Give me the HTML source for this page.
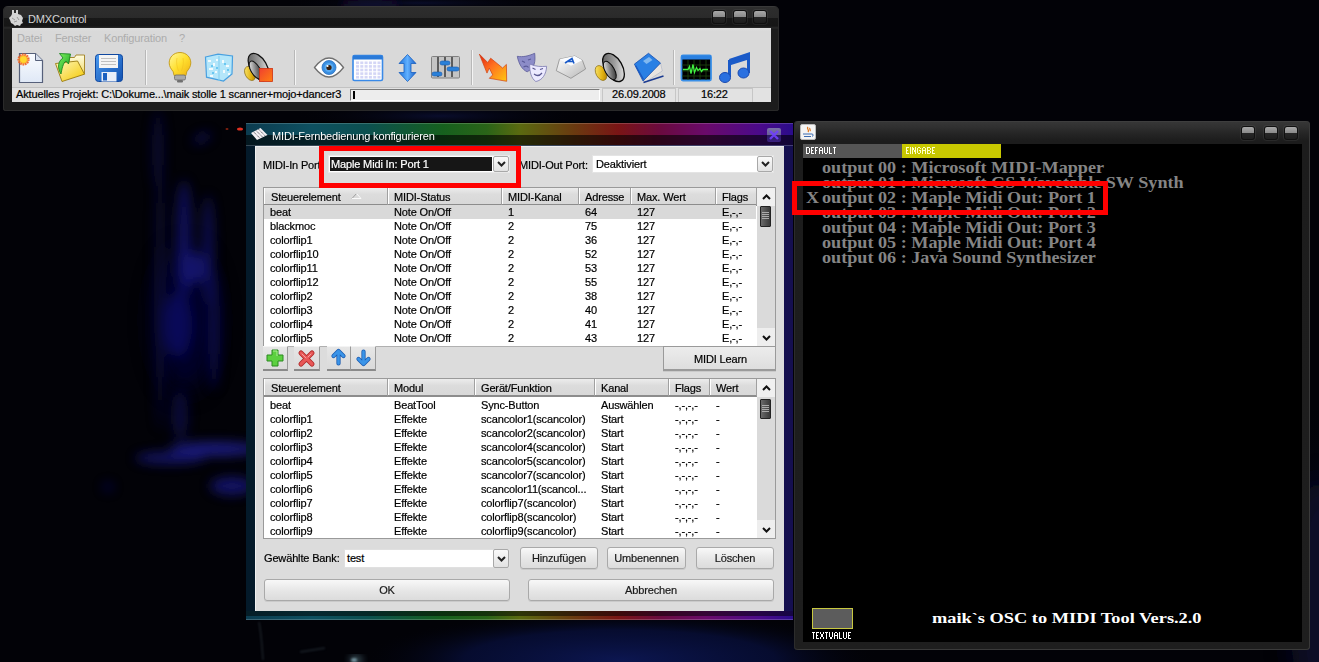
<!DOCTYPE html><html><head><meta charset="utf-8"><style>
*{margin:0;padding:0;box-sizing:border-box}
html,body{width:1319px;height:662px;overflow:hidden}
body{position:relative;background:#03040b;font-family:"Liberation Sans",sans-serif;font-size:11px;color:#000;letter-spacing:-0.15px}
.a{position:absolute}
.t{position:absolute;white-space:nowrap;line-height:13px;-webkit-text-stroke:0.2px currentColor}
.blob{position:absolute;border-radius:50%;filter:blur(14px)}
svg{position:absolute;overflow:visible}
#dmx{left:3px;top:6px;width:776px;height:105px;background:linear-gradient(#444 0,#2e2e2e 1px,#2a2a2a 12px,#181818 12px,#161616 20px,#2a2a2a 22px,#1c1c1c 23px,#1c1c1c);border-radius:5px 5px 3px 3px;box-shadow:inset 1px 0 #2a2a2a,inset -1px 0 #2a2a2a,inset 0 -1px #2a2a2a}
#dmxc{left:12px;top:28px;width:759px;height:74px;background:linear-gradient(#e2e2e2,#d9d9d9 3px)}
.tbb{position:absolute;width:14px;height:14px;border-radius:3px;background:linear-gradient(#a8a8a8,#8a8a8a 50%,#262626 54%,#1e1e1e);border:1px solid #101010;box-shadow:0 0 0 1px rgba(255,255,255,.06)}
#dlg{left:246px;top:122px;width:547px;height:498px;border-radius:4px 4px 0 0;background:linear-gradient(90deg,#041a2a,#06182c 50%,#150f50)}
.rb{position:absolute;left:246px;width:547px;background:linear-gradient(90deg,#0c3c50 0%,#0e5060 12%,#0c5050 22%,#16601e 36%,#2a6418 44%,#5a6a10 50%,#6a3a10 60%,#7a1515 68%,#6a0a40 76%,#6a0a6a 84%,#4a0a8a 94%,#2a0c8a 100%)}
#dlgc{left:255px;top:146px;width:529px;height:465px;background:#dcdcdc;box-shadow:inset 1px 1px #f0f0f0}
.lv{position:absolute;background:#fff;border:1px solid #9a9a9a}
.hd{position:absolute;height:18px;background:linear-gradient(#ececec,#dcdcdc 40%,#d8d8d8);border-right:1px solid #a0a0a0;border-bottom:2px solid #8c8c8c;box-shadow:inset 1px 0 #fff}
.btn{position:absolute;border:1px solid #a9a9a9;border-radius:3px;background:linear-gradient(#f8f8f8,#e6e6e6 55%,#dcdcdc);color:#1a1a1a;box-shadow:0 1px 0 rgba(0,0,0,.08)}
.dd{position:absolute;width:16px;background:linear-gradient(#fafafa,#e2e2e2);border:1px solid #a8a8a8;border-radius:2px}
.sb{position:absolute;background:#e8e8e8}
.thumb{position:absolute;width:11px;background:linear-gradient(90deg,#6a6a6a,#3a3a3a);border:1px solid #222;border-radius:1px}
#rw{left:794px;top:121px;width:516px;height:529px;background:linear-gradient(#464646,#363636 1px,#303030 6px,#262626 12px,#1c1c1c 20px,#1e1e1e);border-radius:4px;box-shadow:inset 1px 0 #2c2c2c,inset -1px 0 #3a3a3a,inset 0 -1px #3a3a3a}
#rwc{left:803px;top:144px;width:499px;height:498px;background:#000}
.out{position:absolute;font-family:"Liberation Serif",serif;font-weight:bold;font-size:17px;color:#858585;white-space:nowrap;line-height:15px;letter-spacing:0;transform:scaleX(1.068);transform-origin:0 0}
.px{position:absolute;font-family:"Liberation Mono",monospace;font-size:9px;line-height:9px;color:#fff;letter-spacing:0;white-space:nowrap}
</style></head><body>
<svg style="left:0;top:0" width="1319" height="662" viewBox="0 0 1319 662">
<defs>
<filter id="b6" x="-50%" y="-50%" width="200%" height="200%"><feGaussianBlur stdDeviation="6"/></filter>
<filter id="b1" x="-50%" y="-50%" width="200%" height="200%"><feGaussianBlur stdDeviation="1"/></filter>
<filter id="b4" x="-50%" y="-50%" width="200%" height="200%"><feGaussianBlur stdDeviation="4"/></filter>
<filter id="b12" x="-50%" y="-50%" width="200%" height="200%"><feGaussianBlur stdDeviation="12"/></filter>
</defs>
<radialGradient id="gBot" cx=".5" cy=".5" r=".5"><stop offset="0" stop-color="#0c1650"/><stop offset=".6" stop-color="#081040" stop-opacity=".7"/><stop offset="1" stop-color="#020207" stop-opacity="0"/></radialGradient>
<radialGradient id="gRt" cx=".5" cy=".5" r=".5"><stop offset="0" stop-color="#0a0e30"/><stop offset="1" stop-color="#020207" stop-opacity="0"/></radialGradient>
<rect width="1319" height="662" fill="#020207"/>
<ellipse cx="620" cy="660" rx="260" ry="50" fill="url(#gBot)"/>
<ellipse cx="1319" cy="560" rx="40" ry="160" fill="url(#gRt)"/>
<ellipse cx="440" cy="116" rx="150" ry="14" fill="url(#gRt)" opacity=".9"/>
<ellipse cx="420" cy="3" rx="140" ry="8" fill="url(#gRt)" opacity=".8"/>
<g filter="url(#b12)">

<ellipse cx="1319" cy="600" rx="30" ry="120" fill="#070a28"/>
<ellipse cx="185" cy="320" rx="30" ry="70" fill="#08083a" opacity=".7"/>
</g>
<g filter="url(#b6)" opacity=".7">
<ellipse cx="158" cy="150" rx="6" ry="40" fill="#101050" opacity=".8"/>
<ellipse cx="160" cy="290" rx="6" ry="140" fill="#0c0c44" opacity=".8"/>
<ellipse cx="184" cy="240" rx="8" ry="60" fill="#18187a"/>
<ellipse cx="208" cy="250" rx="6" ry="55" fill="#141470"/>
<ellipse cx="192" cy="268" rx="14" ry="16" fill="#1a1a88"/>
<ellipse cx="178" cy="325" rx="14" ry="32" fill="#10106a"/>
<ellipse cx="214" cy="330" rx="6" ry="60" fill="#0e0e58"/>
<ellipse cx="202" cy="138" rx="10" ry="4" fill="#181870" transform="rotate(-25 202 138)"/>
<ellipse cx="215" cy="449" rx="45" ry="7" fill="#2828b0"/>
<ellipse cx="170" cy="458" rx="35" ry="6" fill="#1a1a90"/>
<ellipse cx="232" cy="486" rx="22" ry="9" fill="#1a1a90"/>
<ellipse cx="180" cy="415" rx="8" ry="25" fill="#0e0e50"/>
<ellipse cx="108" cy="487" rx="5" ry="4" fill="#10106a"/>
</g>
<g filter="url(#b4)">
<ellipse cx="370" cy="5" rx="30" ry="5" fill="#141030"/>

</g>
<path d="M259 622c2 10 3 22 4 38" stroke="#506068" stroke-width="1.5" fill="none" opacity=".35" filter="url(#b1)"/>
<path d="M300 652l25-4" stroke="#40505a" stroke-width="2" opacity=".35" filter="url(#b1)"/>
<ellipse cx="356" cy="660" rx="6" ry="3" fill="#9ad0e0" opacity=".7" filter="url(#b4)"/>
<ellipse cx="354" cy="660" rx="3" ry="2" fill="#c0f0ff" opacity=".5" filter="url(#b1)"/>
<ellipse cx="240" cy="129" rx="3" ry="1.6" fill="#e03020"/>
<ellipse cx="227" cy="129" rx="1.5" ry="1" fill="#802010"/>
</svg>
<div id="dmx" class="a"></div>
<div class="t" style="left:28px;top:13px;color:#d4d4d4;-webkit-text-stroke:0">DMXControl</div>
<svg style="left:8px;top:9px" width="16" height="17" viewBox="0 0 16 17"><path d="M3 7l1-2 0-4h2v3h2V1h2v4l3 1 2 3-1 3 1 2-2 1-1 2-3-1-2 1-2-2-2-1-1-3-1-2z" fill="#d4d4d4"/><path d="M4 9l3 2M9 8l2 3M6 13l3-1" stroke="#9a9a9a" stroke-width="1"/></svg>
<div class="tbb" style="left:712px;top:10px"></div>
<div class="tbb" style="left:733px;top:10px"></div>
<div class="tbb" style="left:753px;top:10px"></div>
<div id="dmxc" class="a"></div>
<div class="t" style="left:17px;top:32px;color:#acacac;-webkit-text-stroke:0">Datei</div>
<div class="t" style="left:55px;top:32px;color:#acacac;-webkit-text-stroke:0">Fenster</div>
<div class="t" style="left:104px;top:32px;color:#acacac;-webkit-text-stroke:0">Konfiguration</div>
<div class="t" style="left:179px;top:32px;color:#acacac;-webkit-text-stroke:0">?</div>
<div class="a" style="left:145px;top:50px;width:1px;height:35px;background:#b8b8b8;box-shadow:1px 0 #f4f4f4"></div>
<div class="a" style="left:294px;top:50px;width:1px;height:35px;background:#b8b8b8;box-shadow:1px 0 #f4f4f4"></div>
<div class="a" style="left:471px;top:50px;width:1px;height:35px;background:#b8b8b8;box-shadow:1px 0 #f4f4f4"></div>
<div class="a" style="left:673px;top:50px;width:1px;height:35px;background:#b8b8b8;box-shadow:1px 0 #f4f4f4"></div>
<div class="a" style="left:12px;top:87px;width:759px;height:15px;background:#e2e2e2;border-top:1px solid #c2c2c2"></div>
<div class="t" style="left:16px;top:88px;">Aktuelles Projekt: C:\Dokume...\maik stolle 1 scanner+mojo+dancer3</div>
<div class="a" style="left:350px;top:89px;width:250px;height:12px;background:#ededed;border:1px solid #7a7a7a;border-right-color:#fff;border-bottom-color:#fff"></div>
<div class="a" style="left:353px;top:91px;width:2px;height:8px;background:#000"></div>
<div class="a" style="left:602px;top:88px;width:74px;height:14px;border:1px solid #c6c6c6;border-bottom:none"></div>
<div class="a" style="left:678px;top:88px;width:75px;height:14px;border:1px solid #c6c6c6;border-bottom:none"></div>
<div class="t" style="left:612px;top:88px;">26.09.2008</div>
<div class="t" style="left:701px;top:88px;">16:22</div>
<svg style="left:0;top:0" width="800" height="90" viewBox="0 0 800 90">
<defs>
<linearGradient id="gPaper" x1="0" y1="0" x2="0" y2="1"><stop offset="0" stop-color="#fafcff"/><stop offset="1" stop-color="#dfe8f6"/></linearGradient>
<radialGradient id="gSun"><stop offset="0" stop-color="#ffe040"/><stop offset=".5" stop-color="#ffc020"/><stop offset="1" stop-color="#f04a10" stop-opacity=".0"/></radialGradient>
<linearGradient id="gFold" x1="0" y1="0" x2="1" y2="1"><stop offset="0" stop-color="#fff8c0"/><stop offset="1" stop-color="#f4c800"/></linearGradient>
<linearGradient id="gFoldB" x1="0" y1="0" x2="0" y2="1"><stop offset="0" stop-color="#fffce0"/><stop offset="1" stop-color="#f0d860"/></linearGradient>
<linearGradient id="gGreen" x1="0" y1="0" x2="1" y2="1"><stop offset="0" stop-color="#80f060"/><stop offset="1" stop-color="#10a020"/></linearGradient>
<linearGradient id="gBlue" x1="0" y1="0" x2="1" y2="1"><stop offset="0" stop-color="#4a9af0"/><stop offset="1" stop-color="#1050b0"/></linearGradient>
<linearGradient id="gBulb" x1="0" y1="0" x2="1" y2="1"><stop offset="0" stop-color="#fff8a0"/><stop offset=".5" stop-color="#ffe030"/><stop offset="1" stop-color="#f0b010"/></linearGradient>
<linearGradient id="gRed" x1="0" y1="0" x2="1" y2="1"><stop offset="0" stop-color="#f04030"/><stop offset="1" stop-color="#ff8010"/></linearGradient>
<linearGradient id="gCone" x1="0" y1="0" x2="1" y2="1"><stop offset="0" stop-color="#505050"/><stop offset=".55" stop-color="#a0a0a0"/><stop offset="1" stop-color="#ffffff"/></linearGradient>
<linearGradient id="gConeIn" x1="0" y1="0" x2="1" y2="1"><stop offset="0" stop-color="#ffffff"/><stop offset=".6" stop-color="#707070"/><stop offset="1" stop-color="#202020"/></linearGradient>
<linearGradient id="gGold" x1="0" y1="0" x2="1" y2="1"><stop offset="0" stop-color="#fff080"/><stop offset=".6" stop-color="#e0b010"/><stop offset="1" stop-color="#a07000"/></linearGradient>
<linearGradient id="gZig" x1="0" y1="0" x2="1" y2="1"><stop offset="0" stop-color="#e02010"/><stop offset=".45" stop-color="#ff7020"/><stop offset="1" stop-color="#ffc810"/></linearGradient>
<linearGradient id="gKey" x1="0" y1="0" x2="1" y2="1"><stop offset="0" stop-color="#ffffff"/><stop offset="1" stop-color="#b8b8b8"/></linearGradient>
<linearGradient id="gArr" x1="0" y1="0" x2="1" y2="0"><stop offset="0" stop-color="#1a70d8"/><stop offset=".5" stop-color="#60b0ff"/><stop offset="1" stop-color="#1a60c8"/></linearGradient>
</defs>
<!-- new doc -->
<path d="M19.5 53.5h16l7 7v22h-23z" fill="url(#gPaper)" stroke="#56607a" stroke-width="1.2"/>
<path d="M35.5 53.5v7h7" fill="#d8e0ee" stroke="#56607a" stroke-width="1"/>
<circle cx="23.5" cy="59.5" r="6.5" fill="url(#gSun)"/>
<circle cx="23.5" cy="59.5" r="5" fill="none" stroke="#f05a20" stroke-width="2.2" stroke-dasharray="1.3 1.1" opacity=".85"/>
<circle cx="23.5" cy="59.5" r="3" fill="#ffd830"/>
<!-- open folder -->
<path d="M69 57.5h5.5l1.5-2.5h8.5v19l-15 2z" fill="url(#gFoldB)" stroke="#a08020" stroke-width=".9"/>
<path d="M55.5 63.5l22-2.5 7 13.2-22.5 7.3z" fill="url(#gFold)" stroke="#9a7a10" stroke-width=".9"/>
<path d="M61 74c-4-6-3-13 2-16l-3.5-4.5 11 .5-2 10-2.5-3c-3 2-4 8-5 13z" fill="url(#gGreen)" stroke="#108018" stroke-width=".8"/>
<!-- save -->
<rect x="95.5" y="54.5" width="27" height="27" rx="3" fill="url(#gBlue)" stroke="#1048a0"/>
<rect x="99" y="55" width="19" height="13" fill="#f4f4f4"/>
<path d="M101 58.5h15M101 61.5h15M101 64.5h15" stroke="#c0c0c0"/>
<rect x="101.5" y="72" width="15" height="9.5" fill="#e8eef8"/>
<rect x="103" y="73" width="4" height="7.5" fill="#1a60c0"/>
<!-- separator drawn elsewhere -->
<!-- bulb -->
<path d="M180 52.5c6.2 0 10.8 4.6 10.8 10.4 0 3.8-2.2 6.3-4 8.8l-.9 3.8h-11.8l-.9-3.8c-1.8-2.5-4-5-4-8.8 0-5.8 4.6-10.4 10.8-10.4z" fill="url(#gBulb)" stroke="#c8a020" stroke-width="1"/>
<path d="M177 58c-1 4 0 9 1.5 13M183 58c1 4 0 9-1.5 13" stroke="#f0c020" stroke-width=".8" fill="none" opacity=".7"/>
<rect x="174.5" y="75" width="11" height="5" rx="1.5" fill="#a8a8a8" stroke="#6a6a6a" stroke-width=".8"/>
<rect x="177" y="80" width="6" height="2.5" rx="1" fill="#707070"/>
<!-- ice cube -->
<path d="M205.5 57l12.5-2.8 14.5 1.8-.5 18-8.5 7-17-3.8z" fill="#b4e6fa" stroke="#48a0e0" stroke-width="1.2"/>
<path d="M219 56v25" stroke="#80cdf0" stroke-width="1"/>
<g fill="#ffffff" opacity=".85"><rect x="208" y="60" width="3" height="2"/><rect x="213" y="63" width="2" height="3"/><rect x="209" y="68" width="4" height="2"/><rect x="215" y="71" width="2" height="2"/><rect x="210" y="75" width="3" height="2"/><rect x="222" y="60" width="2" height="3"/><rect x="226" y="65" width="3" height="2"/><rect x="223" y="70" width="2" height="3"/><rect x="228" y="73" width="2" height="2"/><rect x="216" y="59" width="2" height="2"/></g>
<g fill="#58c0f0" opacity=".8"><rect x="211" y="65" width="2" height="2"/><rect x="216" y="67" width="2" height="2"/><rect x="224" y="63" width="2" height="2"/><rect x="227" y="69" width="2" height="2"/><rect x="212" y="72" width="2" height="2"/></g>
<!-- speaker + red square -->
<ellipse cx="250" cy="73.5" rx="4.8" ry="7.5" transform="rotate(-28 250 73.5)" fill="url(#gGold)" stroke="#806000" stroke-width=".6"/>
<ellipse cx="258.5" cy="67" rx="8.3" ry="15" transform="rotate(-30 258.5 67)" fill="url(#gCone)" stroke="#101010" stroke-width="1.2"/>
<ellipse cx="255.5" cy="70" rx="4.5" ry="10" transform="rotate(-30 255.5 70)" fill="url(#gConeIn)" stroke="#101010" stroke-width="1"/>
<rect x="259.5" y="68.5" width="13" height="13" fill="url(#gRed)" stroke="#d03010" stroke-width=".8"/>
<!-- eye -->
<path d="M314.5 67.5c5-6.5 10-9.5 14.5-9.5s9.5 3 14.5 9.5c-5 6.5-10 9.5-14.5 9.5s-9.5-3-14.5-9.5z" fill="#ffffff" stroke="#707070" stroke-width="1.3"/>
<circle cx="329" cy="67.5" r="7" fill="#3a8ee0" stroke="#2a70c0" stroke-width=".8"/>
<circle cx="329" cy="67.5" r="4.5" fill="#5aaaf0"/>
<circle cx="329" cy="67.5" r="2.6" fill="#3a2010"/>
<circle cx="327.5" cy="66" r="1.1" fill="#fff"/>
<!-- calendar -->
<rect x="353" y="55.5" width="29.5" height="25" rx="1.5" fill="#ffffff" stroke="#3a8ae8" stroke-width="1.6"/>
<rect x="353" y="55.5" width="29.5" height="4" fill="#2a7ad8"/>
<g fill="#d4d6f6"><rect x="356.0" y="61.5" width="3" height="2.6"/><rect x="360.3" y="61.5" width="3" height="2.6"/><rect x="364.6" y="61.5" width="3" height="2.6"/><rect x="368.9" y="61.5" width="3" height="2.6"/><rect x="373.2" y="61.5" width="3" height="2.6"/><rect x="377.5" y="61.5" width="3" height="2.6"/><rect x="356.0" y="65.1" width="3" height="2.6"/><rect x="360.3" y="65.1" width="3" height="2.6"/><rect x="364.6" y="65.1" width="3" height="2.6"/><rect x="368.9" y="65.1" width="3" height="2.6"/><rect x="373.2" y="65.1" width="3" height="2.6"/><rect x="377.5" y="65.1" width="3" height="2.6"/><rect x="356.0" y="68.7" width="3" height="2.6"/><rect x="360.3" y="68.7" width="3" height="2.6"/><rect x="364.6" y="68.7" width="3" height="2.6"/><rect x="368.9" y="68.7" width="3" height="2.6"/><rect x="373.2" y="68.7" width="3" height="2.6"/><rect x="377.5" y="68.7" width="3" height="2.6"/><rect x="356.0" y="72.3" width="3" height="2.6"/><rect x="360.3" y="72.3" width="3" height="2.6"/><rect x="364.6" y="72.3" width="3" height="2.6"/><rect x="368.9" y="72.3" width="3" height="2.6"/><rect x="373.2" y="72.3" width="3" height="2.6"/><rect x="377.5" y="72.3" width="3" height="2.6"/><rect x="356.0" y="75.9" width="3" height="2.6"/><rect x="360.3" y="75.9" width="3" height="2.6"/><rect x="364.6" y="75.9" width="3" height="2.6"/><rect x="368.9" y="75.9" width="3" height="2.6"/><rect x="373.2" y="75.9" width="3" height="2.6"/><rect x="377.5" y="75.9" width="3" height="2.6"/></g>
<!-- up/down arrow -->
<path d="M407.5 54.5l8.5 9h-5v9h5l-8.5 9-8.5-9h5v-9h-5z" fill="url(#gArr)" stroke="#1860c0" stroke-width=".8"/>
<!-- sliders -->
<rect x="431.5" y="56.5" width="28" height="21.5" rx="1" fill="#c4c4c4" stroke="#808080"/>
<path d="M438 57v20M445 57v20M452 57v20" stroke="#5c5c5c" stroke-width="2"/>
<g fill="#2a80d8" stroke="#1a5ab0" stroke-width=".6"><rect x="432" y="72" width="10" height="4" rx="2"/><rect x="440" y="61" width="10" height="4" rx="2"/><rect x="447" y="67" width="12" height="4" rx="2"/></g>
<!-- zigzag -->
<path d="M479.3 54.1l8.4 8.4 3-4.3 11.9 9.8 3.8-3.6.3 16.9-17.4-3 3.4-3.4-3.4-6.8-2.3 5z" fill="url(#gZig)" stroke="#d04010" stroke-width=".7" stroke-linejoin="round"/>
<!-- masks -->
<path d="M517.3 56.3c6 1 11-.3 17.4-3 .8 8 .3 14.5-7.5 18.5-5-2-8.5-8-9.9-15.5z" fill="#8c8cc8" stroke="#5a5a98" stroke-width=".8"/>
<path d="M522 61l3 1.5M528 60l3-1M523.5 67c2-1 4-1 5 .5" stroke="#5a5a98" stroke-width="1.2" fill="none"/>
<path d="M529.8 64.1c6 2.5 11 2.7 16.8 2.2-.3 8-4.3 14-10.8 15.2-4.5-3-6.5-10-6-17.4z" fill="#eceaff" stroke="#7a78b0" stroke-width=".8"/>
<path d="M532.5 68l3 1.5M540 69.5l3-1M534 74c2.5 2 5.5 2 8-1" stroke="#5a5890" stroke-width="1.2" fill="none"/>
<!-- keycap -->
<path d="M559.5 59.2l15.3-3.2 7.6 4.3 3.2 8.7-14.7 9.3-14.6-7.6z" fill="url(#gKey)" stroke="#8a8a8a" stroke-width=".8"/>
<path d="M559.5 59.2l15.3-3.2 7.6 4.3-11.4 5.5z" fill="#fafcff"/>
<path d="M565 63l7-4.5 2 5M567 61.5h6" stroke="#1a5ac8" stroke-width="1.6" fill="none"/>
<!-- speaker -->
<ellipse cx="601" cy="73" rx="5" ry="8" transform="rotate(-28 601 73)" fill="url(#gGold)" stroke="#806000" stroke-width=".6"/>
<ellipse cx="613.5" cy="67.5" rx="8.8" ry="15.5" transform="rotate(-30 613.5 67.5)" fill="url(#gCone)" stroke="#0a0a0a" stroke-width="1.3"/>
<ellipse cx="609.8" cy="70.5" rx="4.6" ry="10.2" transform="rotate(-30 609.8 70.5)" fill="url(#gConeIn)" stroke="#0a0a0a" stroke-width="1"/>
<!-- book -->
<path d="M660.5 63l1.8 8-16 10.5-3-.5z" fill="#e8e4e0" stroke="#a0a8c0" stroke-width=".5"/>
<path d="M634.4 64.1l14.1-10.8 12 9.7-17.5 18z" fill="#2a80e4" stroke="#1a50b0" stroke-width=".8"/>
<path d="M635.5 65.5l8 14" stroke="#1a58c0" stroke-width="1.4"/>
<path d="M643.5 82.5l20-6.5" stroke="#1a3a90" stroke-width="1.5"/>
<path d="M643 61l6-4 3.5 3-6 4z" fill="#80b8f0"/>
<!-- monitor -->
<rect x="681.5" y="55.5" width="29.5" height="25" rx="1.5" fill="#000" stroke="#3a90e8" stroke-width="1.8"/>
<rect x="681.5" y="55.5" width="29.5" height="4" fill="#2a80e0"/>
<path d="M688 60v20M694 60v20M700 60v20M706 60v20M682 65h28M682 71h28M682 76h28" stroke="#204a10" stroke-width=".8"/>
<path d="M683 69.5h5l1.5-3 1.5 7 2-9 1.5 8 2-5 1.5 3 2-2 1.5 3 1.5-2h5" stroke="#40f040" stroke-width="1.3" fill="none"/>
<!-- notes -->
<path d="M729.5 60.5l19-6.5v19" stroke="#1a5ac8" stroke-width="3" fill="none"/>
<path d="M729.5 60.5l19-6.5v5.5l-19 6z" fill="#1a5ac8"/>
<path d="M729.5 60v17" stroke="#1a5ac8" stroke-width="3"/>
<ellipse cx="725" cy="77.5" rx="5.5" ry="5" fill="#2a70e0" stroke="#1a4ab0"/>
<ellipse cx="743.5" cy="73" rx="5.5" ry="5" fill="#2a70e0" stroke="#1a4ab0"/>
</svg>
<div id="dlg" class="a"></div>
<div class="rb" style="top:123px;height:22px"></div>
<div class="a" style="left:246px;top:135px;width:547px;height:10px;background:rgba(0,0,0,.6)"></div>
<div class="a" style="left:246px;top:123px;width:547px;height:1px;background:rgba(255,255,255,.18)"></div>
<div class="a" style="left:246px;top:122px;width:547px;height:1px;background:#000"></div>
<div class="a" style="left:246px;top:145px;width:547px;height:1px;background:rgba(255,255,255,.2)"></div>
<div class="rb" style="top:611px;height:9px"></div>
<div class="a" style="left:246px;top:611px;width:547px;height:5px;background:rgba(0,0,0,.5)"></div>
<div class="a" style="left:246px;top:619px;width:547px;height:1px;background:rgba(255,255,255,.2)"></div>
<div id="dlgc" class="a"></div>
<div class="t" style="left:272px;top:130px;color:#fff;-webkit-text-stroke:0">MIDI-Fernbedienung konfigurieren</div>
<svg style="left:0;top:0" width="300" height="150" viewBox="0 0 300 150"><path d="M251 133l9.5-5 7 7-10.5 5z" fill="#f4f0f4"/><path d="M253.5 131.8l7 7M256 130.5l7 7M258.5 129.2l7 7" stroke="#404048" stroke-width=".9" stroke-dasharray="1.2 .8"/></svg>
<div class="a" style="left:767px;top:128px;width:14px;height:14px;border-radius:2px;background:linear-gradient(#7a70a8,#6a6098 50%,#2a1a60 52%,#3a2080)"></div>
<svg style="left:768px;top:129px" width="12" height="12" viewBox="0 0 12 12"><path d="M2 2l8 8M10 2l-8 8" stroke="#7040ff" stroke-width="2.4" opacity=".9"/></svg>
<div class="t" style="left:263px;top:159px;">MIDI-In Port</div>
<div class="t" style="left:519px;top:159px;">MIDI-Out Port:</div>
<div class="a" style="left:328px;top:155px;width:182px;height:18px;background:#fff;border:1px solid #e8e8e8"></div>
<div class="a" style="left:330px;top:157px;width:162px;height:14px;background:#161616"></div>
<div class="t" style="left:331px;top:158px;color:#fff">Maple Midi In: Port 1</div>
<div class="dd" style="left:493px;top:156px;height:16px"></div>
<div class="a" style="left:592px;top:155px;width:182px;height:18px;background:#fff;border:1px solid #e4e4e4"></div>
<div class="t" style="left:596px;top:158px;">Deaktiviert</div>
<div class="dd" style="left:757px;top:156px;height:16px"></div>
<svg style="left:497px;top:161px" width="9" height="6" viewBox="0 0 9 6"><path d="M1 1l3.5 3.5L8 1" stroke="#222" stroke-width="2" fill="none"/></svg>
<svg style="left:761px;top:161px" width="9" height="6" viewBox="0 0 9 6"><path d="M1 1l3.5 3.5L8 1" stroke="#222" stroke-width="2" fill="none"/></svg>
<div class="lv" style="left:263px;top:187px;width:513px;height:160px"></div>
<div class="hd" style="left:264px;top:188px;width:124px"></div>
<div class="hd" style="left:388px;top:188px;width:114px"></div>
<div class="hd" style="left:502px;top:188px;width:77px"></div>
<div class="hd" style="left:579px;top:188px;width:52px"></div>
<div class="hd" style="left:631px;top:188px;width:85px"></div>
<div class="hd" style="left:716px;top:188px;width:41px"></div>
<div class="t" style="left:271px;top:191px;">Steuerelement</div>
<div class="t" style="left:394px;top:191px;">MIDI-Status</div>
<div class="t" style="left:508px;top:191px;">MIDI-Kanal</div>
<div class="t" style="left:585px;top:191px;">Adresse</div>
<div class="t" style="left:637px;top:191px;">Max. Wert</div>
<div class="t" style="left:722px;top:191px;">Flags</div>
<div class="sb" style="left:757px;top:188px;width:18px;height:158px;background:#dadada"></div>
<div class="sb" style="left:757px;top:188px;width:18px;height:18px;background:#f0f0f0"></div>
<div class="sb" style="left:757px;top:328px;width:18px;height:18px;background:#eeeeee"></div>
<svg style="left:762px;top:194px" width="9" height="6" viewBox="0 0 9 6"><path d="M1 5l3.5-3.5L8 5" stroke="#111" stroke-width="2" fill="none"/></svg>
<div class="thumb" style="left:760px;top:206px;height:21px"></div>
<svg style="left:762px;top:211px" width="7" height="10" viewBox="0 0 7 10"><path d="M0 1.5h7M0 3.5h7M0 5.5h7M0 7.5h7" stroke="#aaa" stroke-width="1"/></svg>
<svg style="left:762px;top:335px" width="9" height="6" viewBox="0 0 9 6"><path d="M1 1l3.5 3.5L8 1" stroke="#111" stroke-width="2" fill="none"/></svg>
<div class="a" style="left:264px;top:205px;width:492px;height:14px;background:#d9d9d9"></div>
<div class="t" style="left:270px;top:206px;">beat</div>
<div class="t" style="left:394px;top:206px;">Note On/Off</div>
<div class="t" style="left:508px;top:206px;">1</div>
<div class="t" style="left:585px;top:206px;">64</div>
<div class="t" style="left:637px;top:206px;">127</div>
<div class="t" style="left:722px;top:206px;">E,-,-</div>
<div class="t" style="left:270px;top:220px;">blackmoc</div>
<div class="t" style="left:394px;top:220px;">Note On/Off</div>
<div class="t" style="left:508px;top:220px;">2</div>
<div class="t" style="left:585px;top:220px;">75</div>
<div class="t" style="left:637px;top:220px;">127</div>
<div class="t" style="left:722px;top:220px;">E,-,-</div>
<div class="t" style="left:270px;top:234px;">colorflip1</div>
<div class="t" style="left:394px;top:234px;">Note On/Off</div>
<div class="t" style="left:508px;top:234px;">2</div>
<div class="t" style="left:585px;top:234px;">36</div>
<div class="t" style="left:637px;top:234px;">127</div>
<div class="t" style="left:722px;top:234px;">E,-,-</div>
<div class="t" style="left:270px;top:248px;">colorflip10</div>
<div class="t" style="left:394px;top:248px;">Note On/Off</div>
<div class="t" style="left:508px;top:248px;">2</div>
<div class="t" style="left:585px;top:248px;">52</div>
<div class="t" style="left:637px;top:248px;">127</div>
<div class="t" style="left:722px;top:248px;">E,-,-</div>
<div class="t" style="left:270px;top:262px;">colorflip11</div>
<div class="t" style="left:394px;top:262px;">Note On/Off</div>
<div class="t" style="left:508px;top:262px;">2</div>
<div class="t" style="left:585px;top:262px;">53</div>
<div class="t" style="left:637px;top:262px;">127</div>
<div class="t" style="left:722px;top:262px;">E,-,-</div>
<div class="t" style="left:270px;top:276px;">colorflip12</div>
<div class="t" style="left:394px;top:276px;">Note On/Off</div>
<div class="t" style="left:508px;top:276px;">2</div>
<div class="t" style="left:585px;top:276px;">55</div>
<div class="t" style="left:637px;top:276px;">127</div>
<div class="t" style="left:722px;top:276px;">E,-,-</div>
<div class="t" style="left:270px;top:290px;">colorflip2</div>
<div class="t" style="left:394px;top:290px;">Note On/Off</div>
<div class="t" style="left:508px;top:290px;">2</div>
<div class="t" style="left:585px;top:290px;">38</div>
<div class="t" style="left:637px;top:290px;">127</div>
<div class="t" style="left:722px;top:290px;">E,-,-</div>
<div class="t" style="left:270px;top:304px;">colorflip3</div>
<div class="t" style="left:394px;top:304px;">Note On/Off</div>
<div class="t" style="left:508px;top:304px;">2</div>
<div class="t" style="left:585px;top:304px;">40</div>
<div class="t" style="left:637px;top:304px;">127</div>
<div class="t" style="left:722px;top:304px;">E,-,-</div>
<div class="t" style="left:270px;top:318px;">colorflip4</div>
<div class="t" style="left:394px;top:318px;">Note On/Off</div>
<div class="t" style="left:508px;top:318px;">2</div>
<div class="t" style="left:585px;top:318px;">41</div>
<div class="t" style="left:637px;top:318px;">127</div>
<div class="t" style="left:722px;top:318px;">E,-,-</div>
<div class="t" style="left:270px;top:332px;">colorflip5</div>
<div class="t" style="left:394px;top:332px;">Note On/Off</div>
<div class="t" style="left:508px;top:332px;">2</div>
<div class="t" style="left:585px;top:332px;">43</div>
<div class="t" style="left:637px;top:332px;">127</div>
<div class="t" style="left:722px;top:332px;">E,-,-</div>
<svg style="left:351px;top:192px" width="11" height="7" viewBox="0 0 11 7"><path d="M1 6.5L5.5 1.5" stroke="#a0a0a0" stroke-width="1"/><path d="M5.5 1.5L10 6.5M1 6.5h9" stroke="#fafafa" stroke-width="1"/></svg>
<div class="a" style="left:263px;top:346px;width:400px;height:25px;background:#dcdcdc;border-top:1px solid #b0b0b0"></div>
<div class="a" style="left:263px;top:346px;width:25px;height:25px;background:linear-gradient(#e6e6e6,#dadada);border-right:1px solid #9a9a9a;border-bottom:2px solid #8a8a8a;border-top:1px solid #f4f4f4"></div>
<div class="a" style="left:294px;top:346px;width:26px;height:25px;background:linear-gradient(#e6e6e6,#dadada);border-right:1px solid #9a9a9a;border-bottom:2px solid #8a8a8a;border-top:1px solid #f4f4f4"></div>
<div class="a" style="left:327px;top:346px;width:24px;height:25px;background:linear-gradient(#e6e6e6,#dadada);border-right:1px solid #9a9a9a;border-bottom:2px solid #8a8a8a;border-top:1px solid #f4f4f4"></div>
<div class="a" style="left:351px;top:346px;width:25px;height:25px;background:linear-gradient(#e6e6e6,#dadada);border-right:1px solid #9a9a9a;border-bottom:2px solid #8a8a8a;border-top:1px solid #f4f4f4"></div>
<svg style="left:266px;top:349px" width="18" height="18" viewBox="0 0 18 18"><path d="M6 1h6v5h5v6h-5v5H6v-5H1V6h5z" fill="#5cd040" stroke="#2a8a20" stroke-width="1"/><path d="M7 2h4v5" stroke="#a8f090" fill="none" stroke-width="1"/></svg>
<svg style="left:297px;top:349px" width="19" height="19" viewBox="0 0 19 19"><path d="M4 4l11 11M15 4L4 15" stroke="#b02a2a" stroke-width="5" stroke-linecap="round"/><path d="M4 4l11 11M15 4L4 15" stroke="#e85858" stroke-width="3.2" stroke-linecap="round"/><path d="M5 5l4 4M14 5l-3 3" stroke="#f8a0a0" stroke-width="1" stroke-linecap="round"/></svg>
<svg style="left:330px;top:348px" width="17" height="19" viewBox="0 0 17 19"><path d="M3.5 8L8.5 3l5 5M8.5 4v11.5" stroke="#1a5ab0" stroke-width="4.2" stroke-linecap="round" stroke-linejoin="round" fill="none"/><path d="M3.5 8L8.5 3l5 5M8.5 4v11.5" stroke="#3a94e8" stroke-width="2.6" stroke-linecap="round" stroke-linejoin="round" fill="none"/></svg>
<svg style="left:355px;top:348px" width="17" height="19" viewBox="0 0 17 19"><path d="M3.5 11l5 5 5-5M8.5 15V3.5" stroke="#1a5ab0" stroke-width="4.2" stroke-linecap="round" stroke-linejoin="round" fill="none"/><path d="M3.5 11l5 5 5-5M8.5 15V3.5" stroke="#3a94e8" stroke-width="2.6" stroke-linecap="round" stroke-linejoin="round" fill="none"/></svg>
<div class="btn" style="left:663px;top:346px;width:113px;height:25px;border-radius:0;border-color:#9a9a9a;border-width:1px 1px 2px 1px;background:linear-gradient(#ececec,#dedede)"></div>
<div class="t" style="left:694px;top:353px;">MIDI Learn</div>
<div class="lv" style="left:263px;top:378px;width:513px;height:161px"></div>
<div class="hd" style="left:264px;top:379px;width:124px"></div>
<div class="hd" style="left:388px;top:379px;width:87px"></div>
<div class="hd" style="left:475px;top:379px;width:120px"></div>
<div class="hd" style="left:595px;top:379px;width:74px"></div>
<div class="hd" style="left:669px;top:379px;width:41px"></div>
<div class="hd" style="left:710px;top:379px;width:47px"></div>
<div class="t" style="left:271px;top:382px;">Steuerelement</div>
<div class="t" style="left:394px;top:382px;">Modul</div>
<div class="t" style="left:481px;top:382px;">Gerät/Funktion</div>
<div class="t" style="left:601px;top:382px;">Kanal</div>
<div class="t" style="left:675px;top:382px;">Flags</div>
<div class="t" style="left:716px;top:382px;">Wert</div>
<div class="sb" style="left:757px;top:379px;width:18px;height:159px;background:#dadada"></div>
<div class="sb" style="left:757px;top:379px;width:18px;height:18px;background:#f0f0f0"></div>
<div class="sb" style="left:757px;top:520px;width:18px;height:18px;background:#eeeeee"></div>
<svg style="left:762px;top:385px" width="9" height="6" viewBox="0 0 9 6"><path d="M1 5l3.5-3.5L8 5" stroke="#111" stroke-width="2" fill="none"/></svg>
<div class="thumb" style="left:760px;top:399px;height:20px"></div>
<svg style="left:762px;top:404px" width="7" height="10" viewBox="0 0 7 10"><path d="M0 1.5h7M0 3.5h7M0 5.5h7M0 7.5h7" stroke="#aaa" stroke-width="1"/></svg>
<svg style="left:762px;top:527px" width="9" height="6" viewBox="0 0 9 6"><path d="M1 1l3.5 3.5L8 1" stroke="#111" stroke-width="2" fill="none"/></svg>
<div class="t" style="left:270px;top:399px;">beat</div>
<div class="t" style="left:394px;top:399px;">BeatTool</div>
<div class="t" style="left:481px;top:399px;">Sync-Button</div>
<div class="t" style="left:601px;top:399px;">Auswählen</div>
<div class="t" style="left:675px;top:399px;">-,-,-,-</div>
<div class="t" style="left:716px;top:399px;">-</div>
<div class="t" style="left:270px;top:413px;">colorflip1</div>
<div class="t" style="left:394px;top:413px;">Effekte</div>
<div class="t" style="left:481px;top:413px;">scancolor1(scancolor)</div>
<div class="t" style="left:601px;top:413px;">Start</div>
<div class="t" style="left:675px;top:413px;">-,-,-,-</div>
<div class="t" style="left:716px;top:413px;">-</div>
<div class="t" style="left:270px;top:427px;">colorflip2</div>
<div class="t" style="left:394px;top:427px;">Effekte</div>
<div class="t" style="left:481px;top:427px;">scancolor2(scancolor)</div>
<div class="t" style="left:601px;top:427px;">Start</div>
<div class="t" style="left:675px;top:427px;">-,-,-,-</div>
<div class="t" style="left:716px;top:427px;">-</div>
<div class="t" style="left:270px;top:441px;">colorflip3</div>
<div class="t" style="left:394px;top:441px;">Effekte</div>
<div class="t" style="left:481px;top:441px;">scancolor4(scancolor)</div>
<div class="t" style="left:601px;top:441px;">Start</div>
<div class="t" style="left:675px;top:441px;">-,-,-,-</div>
<div class="t" style="left:716px;top:441px;">-</div>
<div class="t" style="left:270px;top:455px;">colorflip4</div>
<div class="t" style="left:394px;top:455px;">Effekte</div>
<div class="t" style="left:481px;top:455px;">scancolor5(scancolor)</div>
<div class="t" style="left:601px;top:455px;">Start</div>
<div class="t" style="left:675px;top:455px;">-,-,-,-</div>
<div class="t" style="left:716px;top:455px;">-</div>
<div class="t" style="left:270px;top:469px;">colorflip5</div>
<div class="t" style="left:394px;top:469px;">Effekte</div>
<div class="t" style="left:481px;top:469px;">scancolor7(scancolor)</div>
<div class="t" style="left:601px;top:469px;">Start</div>
<div class="t" style="left:675px;top:469px;">-,-,-,-</div>
<div class="t" style="left:716px;top:469px;">-</div>
<div class="t" style="left:270px;top:483px;">colorflip6</div>
<div class="t" style="left:394px;top:483px;">Effekte</div>
<div class="t" style="left:481px;top:483px;">scancolor11(scancol...</div>
<div class="t" style="left:601px;top:483px;">Start</div>
<div class="t" style="left:675px;top:483px;">-,-,-,-</div>
<div class="t" style="left:716px;top:483px;">-</div>
<div class="t" style="left:270px;top:497px;">colorflip7</div>
<div class="t" style="left:394px;top:497px;">Effekte</div>
<div class="t" style="left:481px;top:497px;">colorflip7(scancolor)</div>
<div class="t" style="left:601px;top:497px;">Start</div>
<div class="t" style="left:675px;top:497px;">-,-,-,-</div>
<div class="t" style="left:716px;top:497px;">-</div>
<div class="t" style="left:270px;top:511px;">colorflip8</div>
<div class="t" style="left:394px;top:511px;">Effekte</div>
<div class="t" style="left:481px;top:511px;">colorflip8(scancolor)</div>
<div class="t" style="left:601px;top:511px;">Start</div>
<div class="t" style="left:675px;top:511px;">-,-,-,-</div>
<div class="t" style="left:716px;top:511px;">-</div>
<div class="t" style="left:270px;top:525px;">colorflip9</div>
<div class="t" style="left:394px;top:525px;">Effekte</div>
<div class="t" style="left:481px;top:525px;">colorflip9(scancolor)</div>
<div class="t" style="left:601px;top:525px;">Start</div>
<div class="t" style="left:675px;top:525px;">-,-,-,-</div>
<div class="t" style="left:716px;top:525px;">-</div>
<div class="t" style="left:264px;top:552px;">Gewählte Bank:</div>
<div class="a" style="left:344px;top:549px;width:166px;height:19px;background:#fff;border:1px solid #e0e0e0"></div>
<div class="t" style="left:347px;top:552px;">test</div>
<div class="dd" style="left:493px;top:549px;height:19px"></div>
<svg style="left:497px;top:556px" width="9" height="6" viewBox="0 0 9 6"><path d="M1 1l3.5 3.5L8 1" stroke="#222" stroke-width="2" fill="none"/></svg>
<div class="btn" style="left:520px;top:547px;width:78px;height:22px"></div>
<div class="t" style="left:520px;top:552px;width:78px;text-align:center;color:#1a1a1a">Hinzufügen</div>
<div class="btn" style="left:607px;top:547px;width:79px;height:22px"></div>
<div class="t" style="left:607px;top:552px;width:79px;text-align:center;color:#1a1a1a">Umbenennen</div>
<div class="btn" style="left:696px;top:547px;width:78px;height:22px"></div>
<div class="t" style="left:696px;top:552px;width:78px;text-align:center;color:#1a1a1a">Löschen</div>
<div class="btn" style="left:264px;top:579px;width:246px;height:22px"></div>
<div class="t" style="left:264px;top:584px;width:246px;text-align:center;color:#1a1a1a">OK</div>
<div class="btn" style="left:528px;top:579px;width:246px;height:22px"></div>
<div class="t" style="left:528px;top:584px;width:246px;text-align:center;color:#1a1a1a">Abbrechen</div>
<div class="a" style="left:319px;top:146px;width:202px;height:42px;border:5px solid #ff0000"></div>
<div id="rw" class="a"></div>
<div id="rwc" class="a"></div>
<svg style="left:800px;top:124px" width="16" height="16" viewBox="0 0 16 16"><rect x=".5" y=".5" width="15" height="15" rx="1.5" fill="#f4f4f4" stroke="#bbb"/><path d="M8 3c-2 2 2 3 0 5M10 4c-1 1 1 2 0 3" stroke="#e07010" stroke-width="1.2" fill="none"/><path d="M3 10h9c1.5 0 1.5 2 0 2.5M4 12.5h7" stroke="#3a6ab0" stroke-width="1" fill="none"/></svg>
<div class="tbb" style="left:1241px;top:126px;height:14px"></div>
<div class="tbb" style="left:1264px;top:126px;height:14px"></div>
<div class="tbb" style="left:1284px;top:126px;height:14px"></div>
<div class="a" style="left:803px;top:144px;width:99px;height:14px;background:#555"></div>
<div class="a" style="left:902px;top:144px;width:99px;height:14px;background:#c8c800"></div>
<svg style="left:806px;top:147px" width="31" height="7" viewBox="0 0 31 7" shape-rendering="crispEdges"><g fill="#fff"><rect x="0" y="0" width="1" height="1"/><rect x="1" y="0" width="1" height="1"/><rect x="2" y="0" width="1" height="1"/><rect x="0" y="1" width="1" height="1"/><rect x="3" y="1" width="1" height="1"/><rect x="0" y="2" width="1" height="1"/><rect x="3" y="2" width="1" height="1"/><rect x="0" y="3" width="1" height="1"/><rect x="3" y="3" width="1" height="1"/><rect x="0" y="4" width="1" height="1"/><rect x="3" y="4" width="1" height="1"/><rect x="0" y="5" width="1" height="1"/><rect x="3" y="5" width="1" height="1"/><rect x="0" y="6" width="1" height="1"/><rect x="1" y="6" width="1" height="1"/><rect x="2" y="6" width="1" height="1"/><rect x="5" y="0" width="1" height="1"/><rect x="6" y="0" width="1" height="1"/><rect x="7" y="0" width="1" height="1"/><rect x="5" y="1" width="1" height="1"/><rect x="5" y="2" width="1" height="1"/><rect x="5" y="3" width="1" height="1"/><rect x="6" y="3" width="1" height="1"/><rect x="5" y="4" width="1" height="1"/><rect x="5" y="5" width="1" height="1"/><rect x="5" y="6" width="1" height="1"/><rect x="6" y="6" width="1" height="1"/><rect x="7" y="6" width="1" height="1"/><rect x="9" y="0" width="1" height="1"/><rect x="10" y="0" width="1" height="1"/><rect x="11" y="0" width="1" height="1"/><rect x="9" y="1" width="1" height="1"/><rect x="9" y="2" width="1" height="1"/><rect x="9" y="3" width="1" height="1"/><rect x="10" y="3" width="1" height="1"/><rect x="9" y="4" width="1" height="1"/><rect x="9" y="5" width="1" height="1"/><rect x="9" y="6" width="1" height="1"/><rect x="14" y="0" width="1" height="1"/><rect x="15" y="0" width="1" height="1"/><rect x="13" y="1" width="1" height="1"/><rect x="16" y="1" width="1" height="1"/><rect x="13" y="2" width="1" height="1"/><rect x="16" y="2" width="1" height="1"/><rect x="13" y="3" width="1" height="1"/><rect x="14" y="3" width="1" height="1"/><rect x="15" y="3" width="1" height="1"/><rect x="16" y="3" width="1" height="1"/><rect x="13" y="4" width="1" height="1"/><rect x="16" y="4" width="1" height="1"/><rect x="13" y="5" width="1" height="1"/><rect x="16" y="5" width="1" height="1"/><rect x="13" y="6" width="1" height="1"/><rect x="16" y="6" width="1" height="1"/><rect x="18" y="0" width="1" height="1"/><rect x="21" y="0" width="1" height="1"/><rect x="18" y="1" width="1" height="1"/><rect x="21" y="1" width="1" height="1"/><rect x="18" y="2" width="1" height="1"/><rect x="21" y="2" width="1" height="1"/><rect x="18" y="3" width="1" height="1"/><rect x="21" y="3" width="1" height="1"/><rect x="18" y="4" width="1" height="1"/><rect x="21" y="4" width="1" height="1"/><rect x="18" y="5" width="1" height="1"/><rect x="21" y="5" width="1" height="1"/><rect x="19" y="6" width="1" height="1"/><rect x="20" y="6" width="1" height="1"/><rect x="23" y="0" width="1" height="1"/><rect x="23" y="1" width="1" height="1"/><rect x="23" y="2" width="1" height="1"/><rect x="23" y="3" width="1" height="1"/><rect x="23" y="4" width="1" height="1"/><rect x="23" y="5" width="1" height="1"/><rect x="23" y="6" width="1" height="1"/><rect x="24" y="6" width="1" height="1"/><rect x="25" y="6" width="1" height="1"/><rect x="27" y="0" width="1" height="1"/><rect x="28" y="0" width="1" height="1"/><rect x="29" y="0" width="1" height="1"/><rect x="28" y="1" width="1" height="1"/><rect x="28" y="2" width="1" height="1"/><rect x="28" y="3" width="1" height="1"/><rect x="28" y="4" width="1" height="1"/><rect x="28" y="5" width="1" height="1"/><rect x="28" y="6" width="1" height="1"/></g></svg>
<svg style="left:906px;top:147px" width="30" height="7" viewBox="0 0 30 7" shape-rendering="crispEdges"><g fill="#ffffc8"><rect x="0" y="0" width="1" height="1"/><rect x="1" y="0" width="1" height="1"/><rect x="2" y="0" width="1" height="1"/><rect x="0" y="1" width="1" height="1"/><rect x="0" y="2" width="1" height="1"/><rect x="0" y="3" width="1" height="1"/><rect x="1" y="3" width="1" height="1"/><rect x="0" y="4" width="1" height="1"/><rect x="0" y="5" width="1" height="1"/><rect x="0" y="6" width="1" height="1"/><rect x="1" y="6" width="1" height="1"/><rect x="2" y="6" width="1" height="1"/><rect x="4" y="0" width="1" height="1"/><rect x="4" y="1" width="1" height="1"/><rect x="4" y="2" width="1" height="1"/><rect x="4" y="3" width="1" height="1"/><rect x="4" y="4" width="1" height="1"/><rect x="4" y="5" width="1" height="1"/><rect x="4" y="6" width="1" height="1"/><rect x="6" y="0" width="1" height="1"/><rect x="9" y="0" width="1" height="1"/><rect x="6" y="1" width="1" height="1"/><rect x="7" y="1" width="1" height="1"/><rect x="9" y="1" width="1" height="1"/><rect x="6" y="2" width="1" height="1"/><rect x="7" y="2" width="1" height="1"/><rect x="9" y="2" width="1" height="1"/><rect x="6" y="3" width="1" height="1"/><rect x="8" y="3" width="1" height="1"/><rect x="9" y="3" width="1" height="1"/><rect x="6" y="4" width="1" height="1"/><rect x="8" y="4" width="1" height="1"/><rect x="9" y="4" width="1" height="1"/><rect x="6" y="5" width="1" height="1"/><rect x="9" y="5" width="1" height="1"/><rect x="6" y="6" width="1" height="1"/><rect x="9" y="6" width="1" height="1"/><rect x="12" y="0" width="1" height="1"/><rect x="13" y="0" width="1" height="1"/><rect x="11" y="1" width="1" height="1"/><rect x="14" y="1" width="1" height="1"/><rect x="11" y="2" width="1" height="1"/><rect x="11" y="3" width="1" height="1"/><rect x="13" y="3" width="1" height="1"/><rect x="14" y="3" width="1" height="1"/><rect x="11" y="4" width="1" height="1"/><rect x="14" y="4" width="1" height="1"/><rect x="11" y="5" width="1" height="1"/><rect x="14" y="5" width="1" height="1"/><rect x="12" y="6" width="1" height="1"/><rect x="13" y="6" width="1" height="1"/><rect x="17" y="0" width="1" height="1"/><rect x="18" y="0" width="1" height="1"/><rect x="16" y="1" width="1" height="1"/><rect x="19" y="1" width="1" height="1"/><rect x="16" y="2" width="1" height="1"/><rect x="19" y="2" width="1" height="1"/><rect x="16" y="3" width="1" height="1"/><rect x="17" y="3" width="1" height="1"/><rect x="18" y="3" width="1" height="1"/><rect x="19" y="3" width="1" height="1"/><rect x="16" y="4" width="1" height="1"/><rect x="19" y="4" width="1" height="1"/><rect x="16" y="5" width="1" height="1"/><rect x="19" y="5" width="1" height="1"/><rect x="16" y="6" width="1" height="1"/><rect x="19" y="6" width="1" height="1"/><rect x="21" y="0" width="1" height="1"/><rect x="22" y="0" width="1" height="1"/><rect x="23" y="0" width="1" height="1"/><rect x="21" y="1" width="1" height="1"/><rect x="24" y="1" width="1" height="1"/><rect x="21" y="2" width="1" height="1"/><rect x="24" y="2" width="1" height="1"/><rect x="21" y="3" width="1" height="1"/><rect x="22" y="3" width="1" height="1"/><rect x="23" y="3" width="1" height="1"/><rect x="21" y="4" width="1" height="1"/><rect x="24" y="4" width="1" height="1"/><rect x="21" y="5" width="1" height="1"/><rect x="24" y="5" width="1" height="1"/><rect x="21" y="6" width="1" height="1"/><rect x="22" y="6" width="1" height="1"/><rect x="23" y="6" width="1" height="1"/><rect x="26" y="0" width="1" height="1"/><rect x="27" y="0" width="1" height="1"/><rect x="28" y="0" width="1" height="1"/><rect x="26" y="1" width="1" height="1"/><rect x="26" y="2" width="1" height="1"/><rect x="26" y="3" width="1" height="1"/><rect x="27" y="3" width="1" height="1"/><rect x="26" y="4" width="1" height="1"/><rect x="26" y="5" width="1" height="1"/><rect x="26" y="6" width="1" height="1"/><rect x="27" y="6" width="1" height="1"/><rect x="28" y="6" width="1" height="1"/></g></svg>
<div class="out" style="left:822px;top:160px">output 00 : Microsoft MIDI-Mapper</div>
<div class="out" style="left:822px;top:175px">output 01 : Microsoft GS Wavetable SW Synth</div>
<div class="out" style="left:822px;top:190px">output 02 : Maple Midi Out: Port 1</div>
<div class="out" style="left:822px;top:205px">output 03 : Maple Midi Out: Port 2</div>
<div class="out" style="left:822px;top:220px">output 04 : Maple Midi Out: Port 3</div>
<div class="out" style="left:822px;top:235px">output 05 : Maple Midi Out: Port 4</div>
<div class="out" style="left:822px;top:250px">output 06 : Java Sound Synthesizer</div>
<div class="out" style="left:806px;top:190px">X</div>
<div class="a" style="left:792px;top:181px;width:316px;height:34px;border:5px solid #ff0000"></div>
<div class="a" style="left:812px;top:608px;width:41px;height:21px;background:#5c5c5c;border:1px solid #c8c840"></div>
<svg style="left:812px;top:632px" width="40" height="7" viewBox="0 0 40 7" shape-rendering="crispEdges"><g fill="#fff"><rect x="0" y="0" width="1" height="1"/><rect x="1" y="0" width="1" height="1"/><rect x="2" y="0" width="1" height="1"/><rect x="1" y="1" width="1" height="1"/><rect x="1" y="2" width="1" height="1"/><rect x="1" y="3" width="1" height="1"/><rect x="1" y="4" width="1" height="1"/><rect x="1" y="5" width="1" height="1"/><rect x="1" y="6" width="1" height="1"/><rect x="4" y="0" width="1" height="1"/><rect x="5" y="0" width="1" height="1"/><rect x="6" y="0" width="1" height="1"/><rect x="4" y="1" width="1" height="1"/><rect x="4" y="2" width="1" height="1"/><rect x="4" y="3" width="1" height="1"/><rect x="5" y="3" width="1" height="1"/><rect x="4" y="4" width="1" height="1"/><rect x="4" y="5" width="1" height="1"/><rect x="4" y="6" width="1" height="1"/><rect x="5" y="6" width="1" height="1"/><rect x="6" y="6" width="1" height="1"/><rect x="8" y="0" width="1" height="1"/><rect x="11" y="0" width="1" height="1"/><rect x="8" y="1" width="1" height="1"/><rect x="11" y="1" width="1" height="1"/><rect x="9" y="2" width="1" height="1"/><rect x="10" y="2" width="1" height="1"/><rect x="9" y="3" width="1" height="1"/><rect x="10" y="3" width="1" height="1"/><rect x="9" y="4" width="1" height="1"/><rect x="10" y="4" width="1" height="1"/><rect x="8" y="5" width="1" height="1"/><rect x="11" y="5" width="1" height="1"/><rect x="8" y="6" width="1" height="1"/><rect x="11" y="6" width="1" height="1"/><rect x="13" y="0" width="1" height="1"/><rect x="14" y="0" width="1" height="1"/><rect x="15" y="0" width="1" height="1"/><rect x="14" y="1" width="1" height="1"/><rect x="14" y="2" width="1" height="1"/><rect x="14" y="3" width="1" height="1"/><rect x="14" y="4" width="1" height="1"/><rect x="14" y="5" width="1" height="1"/><rect x="14" y="6" width="1" height="1"/><rect x="17" y="0" width="1" height="1"/><rect x="20" y="0" width="1" height="1"/><rect x="17" y="1" width="1" height="1"/><rect x="20" y="1" width="1" height="1"/><rect x="17" y="2" width="1" height="1"/><rect x="20" y="2" width="1" height="1"/><rect x="17" y="3" width="1" height="1"/><rect x="20" y="3" width="1" height="1"/><rect x="17" y="4" width="1" height="1"/><rect x="20" y="4" width="1" height="1"/><rect x="18" y="5" width="1" height="1"/><rect x="19" y="5" width="1" height="1"/><rect x="18" y="6" width="1" height="1"/><rect x="19" y="6" width="1" height="1"/><rect x="23" y="0" width="1" height="1"/><rect x="24" y="0" width="1" height="1"/><rect x="22" y="1" width="1" height="1"/><rect x="25" y="1" width="1" height="1"/><rect x="22" y="2" width="1" height="1"/><rect x="25" y="2" width="1" height="1"/><rect x="22" y="3" width="1" height="1"/><rect x="23" y="3" width="1" height="1"/><rect x="24" y="3" width="1" height="1"/><rect x="25" y="3" width="1" height="1"/><rect x="22" y="4" width="1" height="1"/><rect x="25" y="4" width="1" height="1"/><rect x="22" y="5" width="1" height="1"/><rect x="25" y="5" width="1" height="1"/><rect x="22" y="6" width="1" height="1"/><rect x="25" y="6" width="1" height="1"/><rect x="27" y="0" width="1" height="1"/><rect x="27" y="1" width="1" height="1"/><rect x="27" y="2" width="1" height="1"/><rect x="27" y="3" width="1" height="1"/><rect x="27" y="4" width="1" height="1"/><rect x="27" y="5" width="1" height="1"/><rect x="27" y="6" width="1" height="1"/><rect x="28" y="6" width="1" height="1"/><rect x="29" y="6" width="1" height="1"/><rect x="31" y="0" width="1" height="1"/><rect x="34" y="0" width="1" height="1"/><rect x="31" y="1" width="1" height="1"/><rect x="34" y="1" width="1" height="1"/><rect x="31" y="2" width="1" height="1"/><rect x="34" y="2" width="1" height="1"/><rect x="31" y="3" width="1" height="1"/><rect x="34" y="3" width="1" height="1"/><rect x="31" y="4" width="1" height="1"/><rect x="34" y="4" width="1" height="1"/><rect x="31" y="5" width="1" height="1"/><rect x="34" y="5" width="1" height="1"/><rect x="32" y="6" width="1" height="1"/><rect x="33" y="6" width="1" height="1"/><rect x="36" y="0" width="1" height="1"/><rect x="37" y="0" width="1" height="1"/><rect x="38" y="0" width="1" height="1"/><rect x="36" y="1" width="1" height="1"/><rect x="36" y="2" width="1" height="1"/><rect x="36" y="3" width="1" height="1"/><rect x="37" y="3" width="1" height="1"/><rect x="36" y="4" width="1" height="1"/><rect x="36" y="5" width="1" height="1"/><rect x="36" y="6" width="1" height="1"/><rect x="37" y="6" width="1" height="1"/><rect x="38" y="6" width="1" height="1"/></g></svg>
<div class="out" style="left:932px;top:611px;color:#fff;font-size:14px;transform:scaleX(1.31)">maik`s OSC to MIDI Tool Vers.2.0</div>
</body></html>
